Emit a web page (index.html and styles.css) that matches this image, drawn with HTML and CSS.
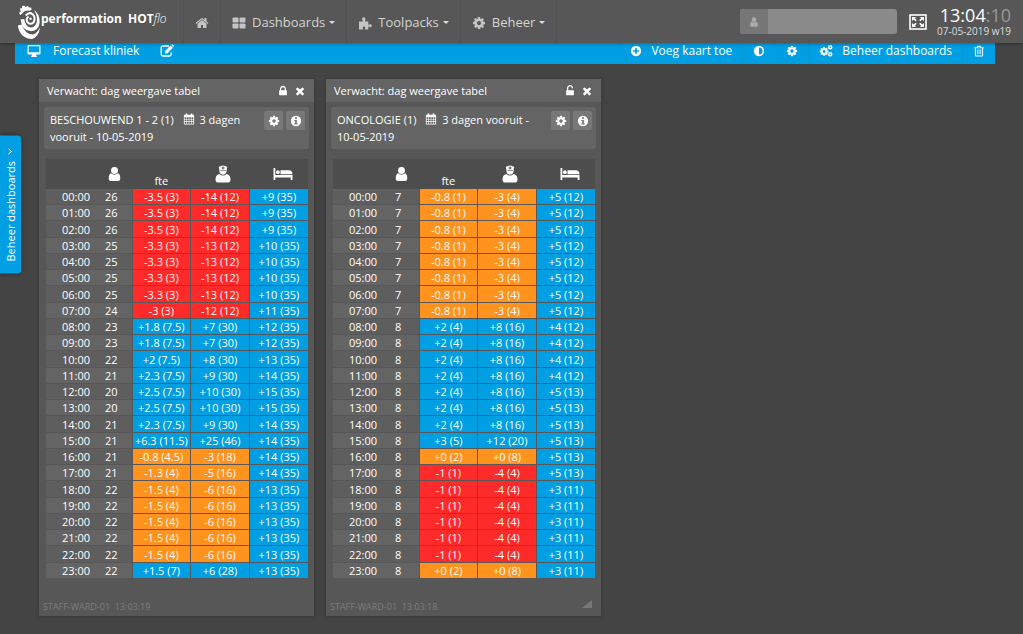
FILE: index.html
```html
<!DOCTYPE html>
<html lang="nl">
<head>
<meta charset="utf-8">
<meta name="viewport" content="width=device-width, initial-scale=1">
<title>performation HOTflo</title>
<link rel="stylesheet" href="styles.css">
</head>
<body>
<svg class="sprite" aria-hidden="true">
  <symbol id="home" viewBox="0 0 1792 1792"><path d="M1472 992v480q0 26-19 45t-45 19h-384v-384h-256v384h-384q-26 0-45-19t-19-45v-480q0-1 .5-3t.5-3l575-474 575 474q1 2 1 6zm223-69l-62 74q-8 9-21 11h-3q-13 0-21-7l-692-577-692 577q-12 8-24 7-13-2-21-11l-62-74q-8-10-7-23.5t11-21.5l719-599q32-26 76-26t76 26l244 204v-195q0-14 9-23t23-9h192q14 0 23 9t9 23v408l219 182q10 8 11 21.5t-7 23.5z"/></symbol>
  <symbol id="grid" viewBox="0 0 14 14"><rect x="0.5" y="1.5" width="6" height="5" rx="1"/><rect x="7.5" y="1.5" width="6" height="5" rx="1"/><rect x="0.5" y="7.5" width="6" height="5" rx="1"/><rect x="7.5" y="7.5" width="6" height="5" rx="1"/></symbol>
  <symbol id="puzzle" viewBox="0 0 14 14"><path d="M1 5.500h3.200c.6 0 .8-.3.500-.8C3.500 3 4.200 1.200 5.800 1.200S8 3 7 4.700c-.3.500 0 .8.600.8h2.700v2.700c0 .8.400.9.900.5 1.200-.9 2.600-.2 2.600 1s-1.400 2-2.600 1.100c-.5-.4-.9-.2-.9.500V13.500H7.400c-.7 0-.8-.4-.4-.9.800-1.100.3-2.200-1-2.200s-1.800 1.100-1 2.200c.4.500.2.900-.5.900H1z"/></symbol>
  <symbol id="cog" viewBox="0 0 1792 1792"><path d="M1152 896q0-106-75-181t-181-75-181 75-75 181 75 181 181 75 181-75 75-181zm512-109v222q0 12-8 23t-20 13l-185 28q-19 54-39 91 35 50 107 138 10 12 10 25t-9 23q-27 37-99 108t-94 71q-12 0-26-9l-138-108q-44 23-91 38-16 136-29 186-7 28-36 28h-222q-14 0-24.5-8.500t-11.500-21.500l-28-184q-49-16-90-37l-141 107q-10 9-25 9-14 0-25-11-126-114-165-168-7-10-7-23 0-12 8-23 15-21 51-66.500t54-70.500q-27-50-41-99l-183-27q-13-2-21-12.500t-8-23.500v-222q0-12 8-23t19-13l186-28q14-46 39-92-40-57-107-138-10-12-10-24 0-10 9-23 26-36 98.500-107.500t94.500-71.500q13 0 26 10l138 107q44-23 91-38 16-136 29-186 7-28 36-28h222q14 0 24.500 8.500t11.500 21.500l28 184q49 16 90 37l142-107q9-9 24-9 13 0 25 10 129 119 165 170 7 8 7 22 0 12-8 23-15 21-51 66.500t-54 70.500q26 50 41 98l183 28q13 2 21 12.500t8 23.500z"/></symbol>
  <symbol id="cogs" viewBox="0 0 15 14"><use href="#cog" x="0" y="2" width="11" height="11"/><use href="#cog" x="9" y="0" width="6" height="6"/><use href="#cog" x="9" y="7.500" width="6" height="6"/></symbol>
  <symbol id="plus" viewBox="0 0 1792 1792"><path d="M1344 960v-128q0-26-19-45t-45-19h-256v-256q0-26-19-45t-45-19h-128q-26 0-45 19t-19 45v256h-256q-26 0-45 19t-19 45v128q0 26 19 45t45 19h256v256q0 26 19 45t45 19h128q26 0 45-19t19-45v-256h256q26 0 45-19t19-45zm320-64q0 209-103 385.500t-279.500 279.500-385.500 103-385.500-103-279.500-279.500-103-385.500 103-385.500 279.500-279.500 385.500-103 385.500 103 279.500 279.500 103 385.500z"/></symbol>
  <symbol id="times" viewBox="0 0 1792 1792"><path d="M1490 1322q0 40-28 68l-136 136q-28 28-68 28t-68-28l-294-294-294 294q-28 28-68 28t-68-28l-136-136q-28-28-28-68t28-68l294-294-294-294q-28-28-28-68t28-68l136-136q28-28 68-28t68 28l294 294 294-294q28-28 68-28t68 28l136 136q28 28 28 68t-28 68l-294 294 294 294q28 28 28 68z"/></symbol>
  <symbol id="lock" viewBox="0 0 1792 1792"><path d="M640 768h512v-192q0-106-75-181t-181-75-181 75-75 181v192zm832 96v576q0 40-28 68t-68 28h-960q-40 0-68-28t-28-68v-576q0-40 28-68t68-28h32v-192q0-184 132-316t316-132 316 132 132 316v192h32q40 0 68 28t28 68z"/></symbol>
  <symbol id="unlock" viewBox="0 0 1792 1792"><path d="M1376 768q40 0 68 28t28 68v576q0 40-28 68t-68 28h-960q-40 0-68-28t-28-68v-576q0-40 28-68t68-28h32v-320q0-185 131.500-316.500t316.500-131.500 316.500 131.500 131.500 316.500q0 26-19 45t-45 19h-64q-26 0-45-19t-19-45q0-106-75-181t-181-75-181 75-75 181v320h736z"/></symbol>
  <symbol id="screen" viewBox="0 0 14 14"><path fill-rule="evenodd" d="M1.500 1h11q1 0 1 1v7.500q0 1-1 1H9l.5 1.700h.5V13H4v-.8h.500L5 10.500H1.500q-1 0-1-1V2q0-1 1-1zm.2 1.200v6h10.600v-6z"/></symbol>
  <symbol id="edit" viewBox="0 0 14 14"><path d="M9 2H3Q1.200 2 1.200 3.800v6.400Q1.200 12 3 12h6.400q1.800 0 1.800-1.800V8.500" fill="none" stroke="currentColor" stroke-width="1.300"/><path d="M5 7.200l5.600-5.600 2.200 2.200-5.600 5.600H5zM11.200 1l.7-.6q.4-.3.800 0l1.100 1.100q.4.400 0 .8l-.7.700z"/></symbol>
  <symbol id="adjust" viewBox="0 0 14 14"><circle cx="7" cy="7" r="5.100" fill="none" stroke="currentColor" stroke-width="1.800"/><path d="M7 2v10A5 5 0 0 1 7 2z"/></symbol>
  <symbol id="trash" viewBox="0 0 14 14"><path fill-rule="evenodd" d="M5 1h4l.8 1.800H13v1.100h-1.200V12q0 1.400-1.200 1.400H3.400Q2.200 13.400 2.200 12V3.900H1V2.800h3.200zm.6 1l-.4.800h3.600L8.400 2zM3.300 3.900v8.300h7.400V3.900z"/><path d="M4.600 5.300h.9v5.600h-.9zM6.600 5.300h.9v5.600h-.9zM8.600 5.300h.9v5.600h-.9z"/></symbol>
  <symbol id="info" viewBox="0 0 14 14"><path fill-rule="evenodd" d="M7 1a6 6 0 1 1 0 12A6 6 0 0 1 7 1zM5.900 2.700v1.900h2.200V2.700zM5 5.700v1.200h1v3H5v1.200h4V9.900H8V5.700z"/></symbol>
  <symbol id="calendar" viewBox="0 0 14 14"><path fill-rule="evenodd" d="M2 2h1V.6h2V2h4V.6h2V2h1q1 0 1 1v9.400q0 1-1 1H2q-1 0-1-1V3q0-1 1-1zm-.1 3v2h2V5zm2.700 0v2h2V5zm2.700 0v2h2V5zM10 5v2h2V5zM1.900 7.700v2h2v-2zm2.700 0v2h2v-2zm2.700 0v2h2v-2zm2.700 0v2h2v-2zm-8.100 2.700v2h2v-2zm2.700 0v2h2v-2zm2.700 0v2h2v-2zm2.700 0v2h2v-2z"/></symbol>
  <symbol id="person" viewBox="0 0 14 16"><circle cx="7" cy="4.200" r="3.700"/><path d="M3.300 7.300Q7 10.200 10.700 7.300 13.200 8.200 13.200 12.500q0 3-2.200 3H3q-2.200 0-2.200-3Q.8 8.200 3.300 7.300z"/></symbol>
  <symbol id="nurse" viewBox="0 0 16 18"><path fill-rule="evenodd" d="M3.700 2.100Q8-1 12.300 2.100l-.7 2.500q.5 4.900-3.600 5.100-4.100-.2-3.600-5.100zM7.500 1.600v1H6.500v1h1v1h1v-1h1v-1h-1v-1zM5.400 5.300v.6q2.600-.7 5.200 0v-.6q-2.600-.8-5.200 0z"/><path d="M4.300 9q3.700 3.200 7.400 0Q15.500 9.800 15.500 14.500q0 3-2.300 3H2.800q-2.300 0-2.300-3Q.5 9.800 4.300 9z"/></symbol>
  <symbol id="bed" viewBox="0 0 20 14"><path d="M.5 1h1.800v7h17.200v5h-1.800v-2.500H2.300V13H.5z"/><circle cx="4.900" cy="5.200" r="1.900"/><path d="M7.500 3.300h8q4 0 4 3.900H7.500z"/></symbol>
  <symbol id="expand" viewBox="0 0 18 16"><rect x="1" y="1" width="16" height="14" fill="none" stroke="currentColor" stroke-width="1.600"/><path d="M3 3h4.200L5.900 4.300l1.900 1.900-1.200 1.100-1.900-1.800L3 7zM15 3v4l-1.700-1.500-1.900 1.800-1.200-1.100 1.900-1.900L10.800 3zM3 13V9l1.700 1.500 1.900-1.800 1.200 1.100-1.900 1.900L7.200 13zM15 13h-4.200l1.300-1.300-1.900-1.900 1.200-1.100 1.900 1.800L15 9z"/></symbol>
</svg>

<header class="navbar">
  <a class="brand" href="#">
    <svg class="logo" viewBox="0 0 24 34" aria-hidden="true">
      <path d="M3 3.500l2.200-.4L5 1.300l2.300-.8L8.400 2l2.100-1.100 1.600 1.700 2-.1.600 2.300-2.200 1Q8 4.800 6.300 7.500L3.400 10.100 2 7.900l1.600-1.400z"/>
      <path d="M.8 20.500Q3 33.500 15 34q7-2 8-12-2.500 6.500-7.500 7.500Q8 29 4.800 19.500z"/>
      <path d="M3.500 14.500Q5 26 14 26.300q8-.8 8.700-9Q23 9 17 5q3.800 6 2.800 12-1.500 5.600-6.300 5.600-5-.8-6.300-8.600z"/>
      <path class="ring" d="M8.700 10.500q3.500-4 7-1.300 3.400 4 .8 8.300-3.300 3-6.300-.7-1.400-3.400 1.300-5.300"/>
      <circle cx="13.500" cy="13.800" r="1.300"/>
    </svg>
    <span class="brand-name">performation&nbsp; HOT<i>flo</i></span>
  </a>
  <nav class="menu">
    <a class="menu-item home" href="#" aria-label="Home"><svg class="icon"><use href="#home"/></svg></a>
    <a class="menu-item" href="#"><svg class="icon"><use href="#grid"/></svg>Dashboards<span class="caret"></span></a>
    <a class="menu-item" href="#"><svg class="icon"><use href="#puzzle"/></svg>Toolpacks<span class="caret"></span></a>
    <a class="menu-item" href="#"><svg class="icon"><use href="#cog"/></svg>Beheer<span class="caret"></span></a>
  </nav>
  <label class="user-box">
    <span class="user-addon"><svg class="icon"><use href="#person"/></svg></span>
    <input class="user-input" type="text" aria-label="Gebruiker">
  </label>
  <button class="expand" type="button" aria-label="Volledig scherm"><svg class="expand-icon"><use href="#expand"/></svg></button>
  <div class="clock">
    <div class="time">13:04<span class="seconds">:10</span></div>
    <div class="date">07-05-2019 w19</div>
  </div>
</header>

<div class="toolbar">
  <a class="tool title" href="#"><svg class="icon"><use href="#screen"/></svg>Forecast kliniek</a>
  <button class="tool" type="button" aria-label="Bewerken"><svg class="icon"><use href="#edit"/></svg></button>
  <span class="spacer"></span>
  <button class="tool" type="button"><svg class="icon small"><use href="#plus"/></svg>Voeg kaart toe</button>
  <button class="tool" type="button" aria-label="Contrast"><svg class="icon small"><use href="#adjust"/></svg></button>
  <button class="tool" type="button" aria-label="Instellingen"><svg class="icon small"><use href="#cog"/></svg></button>
  <button class="tool" type="button"><svg class="icon"><use href="#cogs"/></svg>Beheer dashboards</button>
  <button class="tool" type="button" aria-label="Verwijderen"><svg class="icon small"><use href="#trash"/></svg></button>
</div>

<button class="side-tab" type="button">Beheer dashboards<svg class="chevron" viewBox="0 0 8 8" aria-hidden="true"><path d="M5.500 1.500L2.500 4l3 2.500"/></svg></button>

<main class="board">
  <section class="card">
    <header class="card-head"><h2 class="card-title">Verwacht: dag weergave tabel</h2>
      <button class="head-button" type="button" aria-label="Vergrendeld"><svg class="icon small"><use href="#lock"/></svg></button>
      <button class="head-button" type="button" aria-label="Sluiten"><svg class="icon small"><use href="#times"/></svg></button></header>
    <div class="filter">
      <p class="filter-text">BESCHOUWEND 1 - 2 (1) <svg class="icon small calendar"><use href="#calendar"/></svg> <span>3 dagen</span> <span>vooruit -</span> <span class="day">10-05-2019</span></p>
      <button class="square" type="button" aria-label="Instellingen"><svg class="icon small"><use href="#cog"/></svg></button>
      <button class="square" type="button" aria-label="Informatie"><svg class="icon small"><use href="#info"/></svg></button>
    </div>
    <table class="forecast">
      <thead><tr><th class="hour"></th><th class="count"><svg class="person" role="img" aria-label="Patiënten"><use href="#person"/></svg></th><th class="fte">fte</th><th class="staff"><svg class="nurse" role="img" aria-label="Verpleging"><use href="#nurse"/></svg></th><th class="beds"><svg class="bed" role="img" aria-label="Bedden"><use href="#bed"/></svg></th></tr></thead>
      <tbody id="beschouwend"></tbody>
    </table>
    <footer class="card-foot">STAFF-WARD-01&nbsp; 13:03:19</footer>
  </section>
  <section class="card">
    <header class="card-head"><h2 class="card-title">Verwacht: dag weergave tabel</h2>
      <button class="head-button" type="button" aria-label="Ontgrendeld"><svg class="icon small"><use href="#unlock"/></svg></button>
      <button class="head-button" type="button" aria-label="Sluiten"><svg class="icon small"><use href="#times"/></svg></button></header>
    <div class="filter">
      <p class="filter-text">ONCOLOGIE (1) <svg class="icon small calendar"><use href="#calendar"/></svg> <span>3 dagen</span> <span>vooruit -</span> <span class="day">10-05-2019</span></p>
      <button class="square" type="button" aria-label="Instellingen"><svg class="icon small"><use href="#cog"/></svg></button>
      <button class="square" type="button" aria-label="Informatie"><svg class="icon small"><use href="#info"/></svg></button>
    </div>
    <table class="forecast">
      <thead><tr><th class="hour"></th><th class="count"><svg class="person" role="img" aria-label="Patiënten"><use href="#person"/></svg></th><th class="fte">fte</th><th class="staff"><svg class="nurse" role="img" aria-label="Verpleging"><use href="#nurse"/></svg></th><th class="beds"><svg class="bed" role="img" aria-label="Bedden"><use href="#bed"/></svg></th></tr></thead>
      <tbody id="oncologie"></tbody>
    </table>
    <footer class="card-foot">STAFF-WARD-01&nbsp; 13:03:18<svg class="grip" viewBox="0 0 10 8" aria-hidden="true"><path d="M10 0v8H0z"/></svg></footer>
  </section>
</main>
<script src="app.js"></script>
</body>
</html>
```

FILE: styles.css
```css
* { box-sizing: border-box; }
body {
  margin: 0;
  min-height: 100vh;
  background: #444;
  color: #fff;
  font: 12px/17px "Open Sans", "Noto Sans", sans-serif;
}
button, input { font: inherit; color: inherit; border: 0; margin: 0; padding: 0; background: none; }
a { color: inherit; text-decoration: none; }
h2, p { margin: 0; font-size: inherit; font-weight: 400; }
svg { fill: currentColor; flex: none; }
.sprite { position: absolute; width: 0; height: 0; }
.icon { width: 14px; height: 14px; }
.icon.small { width: 12px; height: 12px; }

.navbar {
  position: relative;
  z-index: 1;
  display: flex;
  align-items: center;
  height: 43px;
  padding: 0 12px 0 17px;
  background: #575757;
  box-shadow: 0 1px 3px rgba(0, 0, 0, 0.3);
}
.brand { display: flex; width: 166px; font-weight: 700; }
.logo { width: 24px; height: 34px; }
.logo .ring { fill: none; stroke: currentColor; stroke-width: 2; }
.brand-name { padding-top: 5px; }
.brand-name i { font-weight: 300; }
.menu { display: flex; align-self: stretch; flex: 1; border-left: 1px solid #505050; }
.menu-item {
  display: flex;
  align-items: center;
  padding: 2px 11px 0;
  border-right: 1px solid #505050;
  color: #d4d4d4;
  font-size: 13px;
}
.menu-item .icon { margin-right: 6px; color: #c4c4c4; }
.menu-item.home .icon { margin: 0; }
.caret { margin-left: 4px; border: 3px solid transparent; border-top-color: #ddd; border-bottom: 0; }
.user-box { display: flex; width: 157px; height: 25px; border-radius: 3px; overflow: hidden; background: #8a8a8a; }
.user-addon { display: flex; align-items: center; justify-content: center; width: 28px; background: #777; color: #aaa; }
.user-addon .icon { width: 10px; height: 10px; }
.user-input { flex: 1; min-width: 0; }
.expand { display: flex; margin: 0 10px 0 12px; }
.expand-icon { width: 18px; height: 16px; }
.clock { text-align: right; }
.time { font-size: 18px; line-height: 20px; }
.seconds { color: #999; }
.date { font-size: 10px; line-height: 13px; color: #ddd; }

.toolbar { display: flex; height: 21px; margin: 0 28px 0 15px; background: #009fe3; }
.tool {
  display: flex;
  align-items: center;
  gap: 9px;
  padding: 0 10px 6px;
  border-left: 1px solid #0b97d6;
}
.tool.title { gap: 12px; border: 0; padding-left: 12px; }
.spacer { flex: 1; }

.side-tab {
  position: absolute;
  left: 0;
  top: 136px;
  display: flex;
  align-items: center;
  gap: 5px;
  width: 21px;
  padding: 12px 0;
  border-radius: 3px 0 0 3px;
  background: #009fe3;
  font-size: 11px;
  writing-mode: vertical-rl;
  transform: rotate(180deg);
  box-shadow: 0 0 4px rgba(0, 0, 0, 0.4);
}
.chevron { width: 8px; height: 8px; fill: none; stroke: #fff; }

.board { display: flex; flex-wrap: wrap; align-items: flex-start; gap: 12px; padding: 15px 39px 18px; }
.card { width: 275px; background: #575757; box-shadow: 0 0 4px rgba(0, 0, 0, 0.25); }
.card-head { display: flex; align-items: center; gap: 5px; height: 23px; padding: 0 8px; background: #646464; font-size: 11px; }
.card-title { flex: 1; }
.head-button { display: flex; }
.filter {
  display: flex;
  gap: 3px;
  margin: 5px 5px 10px;
  padding: 4px;
  border-radius: 3px;
  background: #646464;
  font-size: 11px;
}
.filter-text { flex: 1; padding-left: 2px; }
.day { white-space: nowrap; }
.calendar { margin: 0 2px 0 6px; vertical-align: -1px; }
.square { display: flex; align-items: center; justify-content: center; width: 19px; height: 19px; border-radius: 2px; background: #787878; }

.forecast {
  width: 262px;
  height: 420px;
  margin-left: 7px;
  border-collapse: collapse;
  table-layout: fixed;
  font-size: 11px;
  line-height: 15px;
  text-align: center;
}
.forecast th { height: 30px; padding: 0; background: #4d4d4d; font-weight: 400; vertical-align: middle; }
.forecast th svg { display: block; margin: 0 auto; }
.forecast .hour { width: 54px; }
.forecast .count { width: 32px; }
.forecast th.fte { padding-top: 12px; }
.forecast th.staff { padding-left: 6px; }
.forecast th.beds { padding-left: 9px; }
.person { width: 13px; height: 16px; }
.forecast th .person { margin-left: 8px; }
.nurse { width: 16px; height: 18px; }
.bed { width: 20px; height: 14px; }
.forecast td { padding: 0; border-bottom: 1px solid #575757; background: #646464; }
.forecast tr:nth-child(odd) td { background: #5e5e5e; }
.forecast td:nth-child(1) { text-align: right; padding-right: 10px; }
.forecast td:nth-child(2) { text-align: left; padding-left: 5px; }
.forecast tbody td.one { padding-left: 8px; }
.forecast tbody td.red, .forecast tbody td.orange, .forecast tbody td.blue { border-left: 1px solid #575757; }
.forecast tbody td.red { background: #ff2a2a; }
.forecast tbody td.orange { background: #ff931e; }
.forecast tbody td.blue { background: #009fe3; }

.card-foot { display: flex; justify-content: space-between; align-items: flex-start; height: 37px; padding: 21px 9px 0 4px; color: #7d7d7d; font-size: 9px; line-height: 14px; }
.grip { width: 10px; height: 8px; color: #777; }
```

FILE: app.js
```js
// Each row: present, fte, staff, beds, and the colour of fte and staff.
const wards = {
  beschouwend: [
    ["26", "-3.5 (3)", "-14 (12)", "+9 (35)", "red"],
    ["26", "-3.5 (3)", "-14 (12)", "+9 (35)", "red"],
    ["26", "-3.5 (3)", "-14 (12)", "+9 (35)", "red"],
    ["25", "-3.3 (3)", "-13 (12)", "+10 (35)", "red"],
    ["25", "-3.3 (3)", "-13 (12)", "+10 (35)", "red"],
    ["25", "-3.3 (3)", "-13 (12)", "+10 (35)", "red"],
    ["25", "-3.3 (3)", "-13 (12)", "+10 (35)", "red"],
    ["24", "-3 (3)", "-12 (12)", "+11 (35)", "red"],
    ["23", "+1.8 (7.5)", "+7 (30)", "+12 (35)", "blue"],
    ["23", "+1.8 (7.5)", "+7 (30)", "+12 (35)", "blue"],
    ["22", "+2 (7.5)", "+8 (30)", "+13 (35)", "blue"],
    ["21", "+2.3 (7.5)", "+9 (30)", "+14 (35)", "blue"],
    ["20", "+2.5 (7.5)", "+10 (30)", "+15 (35)", "blue"],
    ["20", "+2.5 (7.5)", "+10 (30)", "+15 (35)", "blue"],
    ["21", "+2.3 (7.5)", "+9 (30)", "+14 (35)", "blue"],
    ["21", "+6.3 (11.5)", "+25 (46)", "+14 (35)", "blue"],
    ["21", "-0.8 (4.5)", "-3 (18)", "+14 (35)", "orange"],
    ["21", "-1.3 (4)", "-5 (16)", "+14 (35)", "orange"],
    ["22", "-1.5 (4)", "-6 (16)", "+13 (35)", "orange"],
    ["22", "-1.5 (4)", "-6 (16)", "+13 (35)", "orange"],
    ["22", "-1.5 (4)", "-6 (16)", "+13 (35)", "orange"],
    ["22", "-1.5 (4)", "-6 (16)", "+13 (35)", "orange"],
    ["22", "-1.5 (4)", "-6 (16)", "+13 (35)", "orange"],
    ["22", "+1.5 (7)", "+6 (28)", "+13 (35)", "blue"]
  ],
  oncologie: [
    ...Array(8).fill(["7", "-0.8 (1)", "-3 (4)", "+5 (12)", "orange"]),
    ...Array(4).fill(["8", "+2 (4)", "+8 (16)", "+4 (12)", "blue"]),
    ...Array(3).fill(["8", "+2 (4)", "+8 (16)", "+5 (13)", "blue"]),
    ["8", "+3 (5)", "+12 (20)", "+5 (13)", "blue"],
    ["8", "+0 (2)", "+0 (8)", "+5 (13)", "orange"],
    ["8", "-1 (1)", "-4 (4)", "+5 (13)", "red"],
    ...Array(5).fill(["8", "-1 (1)", "-4 (4)", "+3 (11)", "red"]),
    ["8", "+0 (2)", "+0 (8)", "+3 (11)", "orange"]
  ]
};

for (const [id, rows] of Object.entries(wards)) {
  const body = document.getElementById(id);
  rows.forEach(([present, fte, staff, beds, colour], hour) => {
    const row = body.insertRow();
    const cells = [
      [String(hour).padStart(2, "0") + ":00", ""],
      [present, present.length === 1 ? "one" : ""],
      [fte, colour],
      [staff, colour],
      [beds, "blue"]
    ];
    for (const [text, name] of cells) {
      const cell = row.insertCell();
      cell.textContent = text;
      if (name) cell.className = name;
    }
  });
}
```
